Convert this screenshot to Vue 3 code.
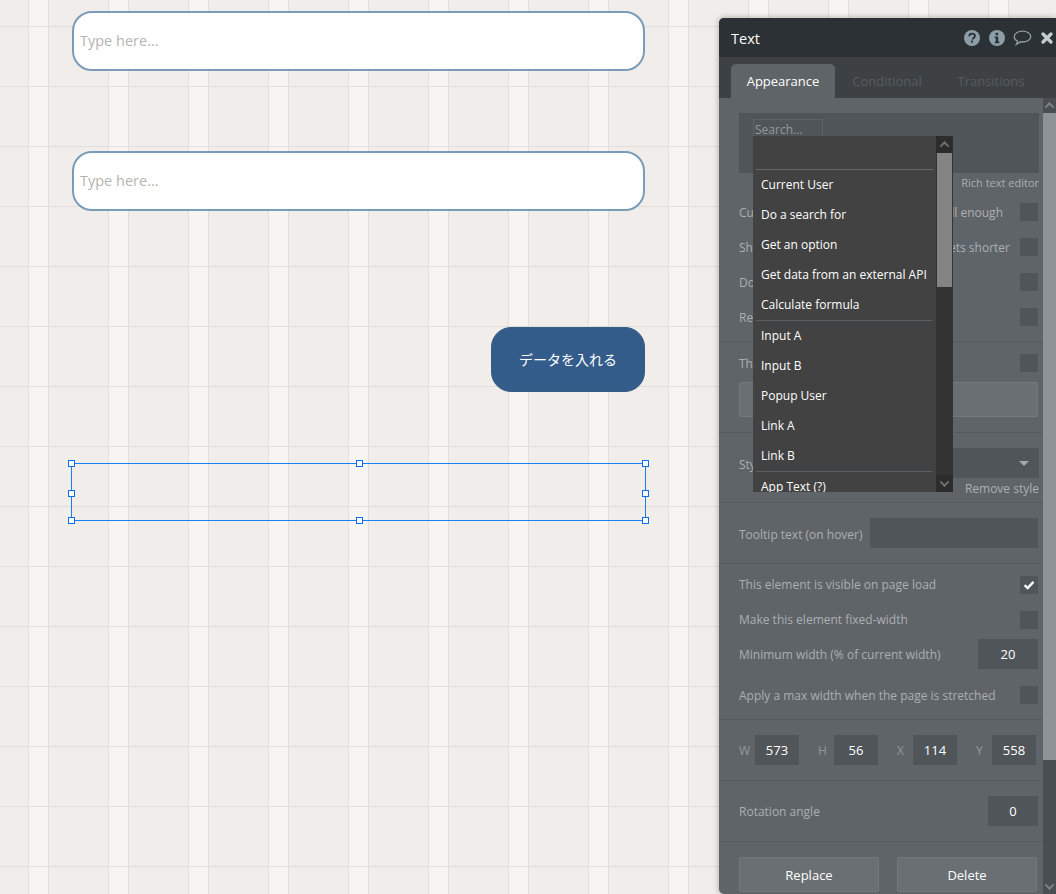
<template>
  <div class="editor">
    <!-- canvas elements -->
    <div class="type-input first"><span>Type here...</span></div>
    <div class="type-input second"><span>Type here...</span></div>
    <div class="canvas-btn">データを入れる</div>
    <div class="selection">
      <i v-for="h in handles" :key="h" class="handle" :class="h"></i>
    </div>

    <!-- property editor window -->
    <section class="panel">
      <header class="panel-head">
        <span class="panel-title">Text</span>
        <div class="head-icons">
          <svg class="ic" viewBox="0 0 16 16" width="16" height="16">
            <circle cx="8" cy="8" r="8" fill="#8d9ea8" />
            <path d="M5.2 6.2C5.3 4.5 6.5 3.600 8.100 3.600c1.600 0 2.800.9 2.800 2.300 0 1-.5 1.500-1.300 2-.7.5-.9.7-.9 1.500" fill="none" stroke="#2b3134" stroke-width="1.900" />
            <rect x="6.900" y="10.600" width="2" height="2" fill="#2b3134" />
          </svg>
          <svg class="ic" viewBox="0 0 16 16" width="16" height="16">
            <circle cx="8" cy="8" r="8" fill="#8d9ea8" />
            <rect x="6.600" y="2.800" width="2.600" height="2.400" fill="#2b3134" />
            <path d="M5.800 6.600h3.400v5h1.100v1.700H5.800v-1.700h1v-3.300h-1z" fill="#2b3134" />
          </svg>
          <svg class="ic bubble" viewBox="0 0 19 16" width="19" height="16">
            <path d="M9.500 1.200c4.400 0 8.300 2.300 8.300 5.400s-3.900 5.400-8.300 5.400c-.8 0-1.500-.1-2.200-.2-1.100 1-2.500 1.900-4 2.500.7-1 1.100-2 1.200-3.200C2.600 10.300 1.200 8.600 1.200 6.600c0-3.100 3.900-5.400 8.300-5.400z" fill="none" stroke="#8d9ea8" stroke-width="1.300" />
          </svg>
          <svg class="ic close" viewBox="0 0 14 14" width="14" height="14">
            <path d="M3 3l8 8M11 3l-8 8" stroke="#c3ccd1" stroke-width="3.400" stroke-linecap="round" />
          </svg>
        </div>
      </header>

      <nav class="tabs">
        <span class="tab active">Appearance</span>
        <span class="tab">Conditional</span>
        <span class="tab">Transitions</span>
      </nav>

      <div class="panel-main">
        <div class="props">
          <div class="group g-text">
            <div class="editor-box">
              <div class="search">Search...</div>
            </div>
            <div class="link-line">Rich text editor</div>
            <div class="rows">
              <div v-for="r in topRows" :key="r.head" class="row">
                <span>{{ r.head }}</span>
                <span class="tail" :style="{ marginRight: r.gap + 'px' }">{{ r.tail }}</span>
                <i class="check"></i>
              </div>
            </div>
          </div>

          <div class="group g-th">
            <div class="row"><span>Th</span><i class="check push"></i></div>
            <div class="light-box"></div>
          </div>

          <div class="group g-style">
            <div class="row tall">
              <span class="low">Sty</span>
              <div class="select"><i class="caret"></i></div>
            </div>
            <div class="link-line remove">Remove style</div>
          </div>

          <div class="group g-plain">
            <div class="row tall">
              <span class="low">Tooltip text (on hover)</span>
              <div class="field tooltip"></div>
            </div>
          </div>

          <div class="group g-visible">
            <div class="row">
              <span class="raised">This element is visible on page load</span>
              <i class="check push on">
                <svg viewBox="0 0 14 12" width="12" height="10">
                  <path d="M1.800 6.200l3.600 3.600 7-7.500" fill="none" stroke="#fff" stroke-width="2.800" />
                </svg>
              </i>
            </div>
            <div class="row mt17"><span class="raised">Make this element fixed-width</span><i class="check push"></i></div>
            <div class="row tall mt10">
              <span>Minimum width (% of current width)</span>
              <div class="field min-w">20</div>
            </div>
            <div class="row mt17"><span>Apply a max width when the page is stretched</span><i class="check push"></i></div>
          </div>

          <div class="group g-plain">
            <div class="sizes">
              <label v-for="s in sizes" :key="s.k" class="size">
                <span>{{ s.k }}</span>
                <b class="field">{{ s.v }}</b>
              </label>
            </div>
          </div>

          <div class="group g-plain">
            <div class="row tall">
              <span>Rotation angle</span>
              <div class="field rot">0</div>
            </div>
          </div>

          <div class="actions">
            <button>Replace</button>
            <button>Delete</button>
          </div>
        </div>

        <div class="bar">
          <div class="bar-btn up"><i></i></div>
          <div class="bar-thumb"></div>
          <div class="bar-track"></div>
          <div class="bar-btn down"><i></i></div>
        </div>
      </div>

      <!-- dynamic data menu -->
      <div class="menu">
        <div class="menu-list">
          <div class="menu-empty"></div>
          <template v-for="(grp, i) in menu" :key="i">
            <div class="menu-sep" :class="{ bluish: i > 0 }"></div>
            <div v-for="item in grp" :key="item" class="menu-item">{{ item }}</div>
          </template>
        </div>
        <div class="menu-bar">
          <div class="menu-arrow up"><i></i></div>
          <div class="menu-thumb"></div>
          <div class="menu-track"></div>
          <div class="menu-arrow down"><i></i></div>
        </div>
      </div>
    </section>
  </div>
</template>

<script setup>
const handles = ['tl', 'tm', 'tr', 'ml', 'mr', 'bl', 'bm', 'br']

const topRows = [
  { head: 'Cu', tail: 'll enough', gap: 17 },
  { head: 'Sh', tail: 'ets shorter', gap: 10 },
  { head: 'Do', tail: '', gap: 0 },
  { head: 'Re', tail: '', gap: 0 }
]

const sizes = [
  { k: 'W', v: 573 },
  { k: 'H', v: 56 },
  { k: 'X', v: 114 },
  { k: 'Y', v: 558 }
]

const menu = [
  ['Current User', 'Do a search for', 'Get an option', 'Get data from an external API', 'Calculate formula'],
  ['Input A', 'Input B', 'Popup User', 'Link A', 'Link B'],
  ['App Text (?)']
]
</script>

<style>
html,
body {
  margin: 0;
  overflow: hidden;
}
</style>

<style scoped>
.editor {
  position: relative;
  width: 1056px;
  height: 894px;
  overflow: hidden;
  font-family: "Open Sans", "Noto Sans CJK JP", sans-serif;
  background-color: #f0edea;
  /* bubble's grid: rows every 60px, gutters every 80px */
  background-image:
    linear-gradient(#e1dfdc 1px, transparent 1px),
    linear-gradient(90deg, #e1dfdc 1px, transparent 1px),
    linear-gradient(90deg, #e1dfdc 1px, transparent 1px),
    linear-gradient(90deg, #f7f4f1 20px, transparent 20px);
  background-size: 100% 60px, 80px 100%, 80px 100%, 80px 100%;
  background-position: 0 26px, 28px 0, 48px 0, 28px 0;
}

.type-input {
  position: absolute;
  left: 72px;
  width: 573px;
  height: 60px;
  box-sizing: border-box;
  border: 2px solid #7b9cb9;
  border-radius: 20px;
  background: #fff;
  display: flex;
  align-items: center;
  padding: 0 0 2px 6px;
  color: #b8b3b1;
  font-family: "Open Sans", sans-serif;
  font-size: 14.500px;
}
.type-input.first { top: 11px; }
.type-input.second { top: 151px; }

.canvas-btn {
  position: absolute;
  left: 491px;
  top: 327px;
  width: 154px;
  height: 65px;
  box-sizing: border-box;
  border: 1px solid #3a5d85;
  border-radius: 20px;
  background: #335c8b;
  color: #fff;
  font-size: 14px;
  display: flex;
  align-items: center;
  justify-content: center;
  padding-bottom: 2px;
}

.selection {
  position: absolute;
  left: 71px;
  top: 463px;
  width: 575px;
  height: 58px;
  box-sizing: border-box;
  border: 1px solid #1a7ff0;
}
.handle {
  position: absolute;
  width: 7px;
  height: 7px;
  box-sizing: border-box;
  background: #fff;
  border: 1px solid #0a6cf0;
}
.handle.tl, .handle.tm, .handle.tr { top: -4px; }
.handle.ml, .handle.mr { top: 26px; }
.handle.bl, .handle.bm, .handle.br { bottom: -4px; }
.handle.tl, .handle.ml, .handle.bl { left: -4px; }
.handle.tm, .handle.bm { left: 284px; }
.handle.tr, .handle.mr, .handle.br { right: -4px; }

.panel {
  position: absolute;
  left: 719px;
  top: 18px;
  width: 337px;
  height: 876px;
  overflow: hidden;
  border-radius: 5px 0 0 5px;
  background: #5f6468;
  box-shadow: 0 0 6px rgba(0, 0, 0, 0.3);
  font-size: 12px;
  color: #abafb2;
}

.panel-head {
  height: 39px;
  background: #2b3134;
  display: flex;
  align-items: center;
  padding-left: 12px;
}
.panel-title {
  color: #fff;
  font-size: 14.500px;
  padding-top: 2px;
}
.head-icons {
  margin-left: auto;
  display: flex;
  align-items: center;
}
.ic { display: block; }
.ic:first-child { margin-right: 9px; margin-left: -1px; }
.bubble { margin-left: 8px; }
.close { margin-left: 8px; margin-right: 2px; }

.tabs {
  height: 41px;
  background: #3d4144;
  display: flex;
  align-items: flex-end;
  padding-left: 12px;
  box-sizing: border-box;
  font-size: 13px;
}
.tab {
  height: 34px;
  line-height: 34px;
  width: 104px;
  text-align: center;
  color: #565b5f;
}
.tab.active {
  background: #5f6468;
  color: #fff;
  border-radius: 5px 5px 0 0;
}

.panel-main {
  display: flex;
  height: 796px;
}
.props {
  width: 324px;
  flex: none;
  box-sizing: border-box;
}
.group {
  border-bottom: 1px solid #565b5f;
  padding: 15px 4px 15px 20px;
}
.g-th { padding-top: 12px; }
.g-style { padding-bottom: 5px; }
.g-visible { padding-top: 12px; }

.editor-box {
  height: 60px;
  background: #50555a;
  padding: 6px 14px;
  box-sizing: border-box;
}
.search {
  width: 70px;
  height: 18px;
  box-sizing: border-box;
  border: 1px solid #5d6267;
  font-size: 12px;
  line-height: 19px;
  padding-left: 1px;
  color: #94989c;
}
.link-line {
  height: 20px;
  line-height: 20px;
  text-align: right;
  font-size: 11px;
}
.link-line.remove { height: 19px; line-height: 21px; font-size: 12px; }
.rows {
  margin-top: 10px;
  display: flex;
  flex-direction: column;
  gap: 17px;
}
.row {
  height: 18px;
  display: flex;
  align-items: center;
  white-space: nowrap;
  padding-right: 1px;
}
.row.tall { height: 30px; padding-right: 0; }
.raised { margin-bottom: 2px; }
.low { margin-top: 2px; }
.mt17 { margin-top: 17px; }
.mt10 { margin-top: 10px; }
.tail { margin-left: auto; }
.check {
  flex: none;
  width: 18px;
  height: 18px;
  background: #505559;
  border-radius: 1px;
  display: flex;
  align-items: center;
  justify-content: center;
}
.check.push { margin-left: auto; }

.light-box {
  margin-top: 10px;
  height: 35px;
  box-sizing: border-box;
  width: 299px;
  background: #6a6f73;
  border: 1px solid #74797d;
  border-radius: 2px;
}
.select {
  margin-left: auto;
  width: 169px;
  height: 30px;
  background: #505559;
  position: relative;
}
.caret {
  position: absolute;
  right: 10px;
  top: 13px;
  border-left: 5px solid transparent;
  border-right: 5px solid transparent;
  border-top: 5px solid #a4a8ab;
}
.field {
  background: #505559;
  color: #fff;
  height: 30px;
  flex: none;
  display: flex;
  align-items: center;
  justify-content: center;
  font-size: 13px;
  font-weight: 400;
}
.row .field { margin-left: auto; margin-right: 1px; }
.tooltip { width: 168px; }
.min-w { width: 60px; }
.rot { width: 50px; }

.sizes {
  display: flex;
  gap: 19px;
}
.size {
  display: flex;
  align-items: center;
}
.size span { width: 16px; color: #94999c; }
.size .field { width: 44px; }

.actions {
  padding: 15px 0 0 20px;
  display: flex;
  gap: 18px;
}
.actions button {
  width: 140px;
  height: 35px;
  box-sizing: border-box;
  background: #6a6f73;
  border: 1px solid #74797d;
  border-radius: 2px;
  color: #fff;
  font: 13px "Open Sans", sans-serif;
}

.bar {
  width: 13px;
  flex: none;
  display: flex;
  flex-direction: column;
  background: #4a4e51;
}
.bar-btn {
  height: 15px;
  background: #4a4e51;
  flex: none;
  display: flex;
  align-items: center;
  justify-content: center;
}
.bar-btn i, .menu-arrow i {
  display: block;
  width: 5px;
  height: 5px;
  border-left: 2px solid #7d8185;
  border-top: 2px solid #7d8185;
  transform: rotate(45deg) translate(1px, 1px);
}
.bar-btn.down i, .menu-arrow.down i {
  transform: rotate(225deg) translate(1px, 1px);
}
.bar-thumb {
  height: 647px;
  background: #909396;
  flex: none;
}
.bar-track { flex: 1; }

.menu {
  position: absolute;
  left: 34px;
  top: 118px;
  width: 200px;
  height: 356px;
  background: #424242;
  display: flex;
  overflow: hidden;
  color: #fff;
}
.menu-list {
  width: 183px;
  flex: none;
  overflow: hidden;
}
.menu-empty { height: 33px; }
.menu-sep {
  height: 1px;
  margin: 0 3px;
  background: #666;
}
.menu-sep.bluish { background: #585d63; }
.menu-item {
  height: 30px;
  line-height: 29px;
  padding-left: 8px;
  white-space: nowrap;
}
.menu-bar {
  width: 17px;
  flex: none;
  display: flex;
  flex-direction: column;
  background: #333;
}
.menu-arrow {
  height: 17px;
  flex: none;
  background: #2c2c2c;
  display: flex;
  align-items: center;
  justify-content: center;
}
.menu-arrow i { border-color: #6e6e6e; }
.menu-thumb {
  height: 134px;
  flex: none;
  margin: 0 1px;
  background: #848484;
}
.menu-track { flex: 1; }
</style>
